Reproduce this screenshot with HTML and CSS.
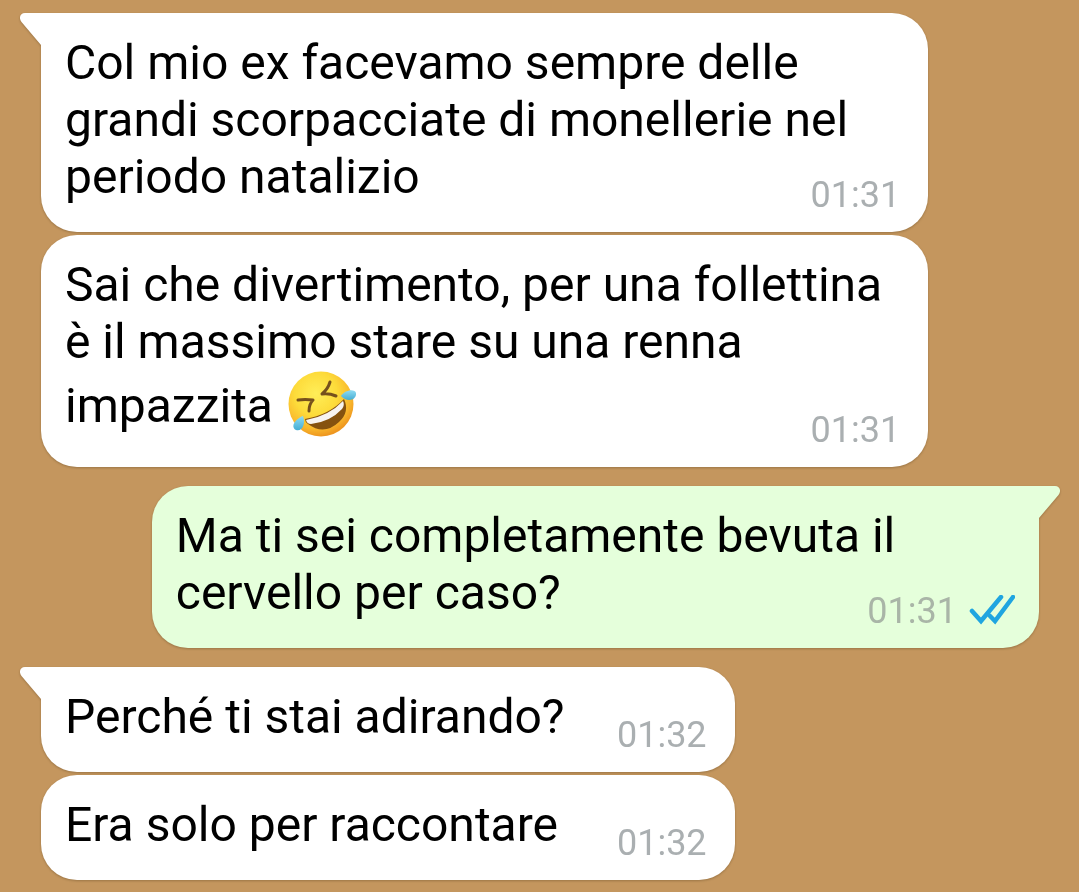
FILE: index.html
```html
<!DOCTYPE html>
<html lang="it">
<head>
    <meta charset="UTF-8">
    <meta name="viewport" content="width=device-width, initial-scale=1.0">
    <title>Chat</title>
    <link rel="stylesheet" href="styles.css">
</head>
<body>
    <main class="chat">
        <div class="group">
            <div class="bubble bubble-in has-tail">
                <svg class="tail" viewBox="0 0 22 33" aria-hidden="true"><path d="M22 0H5C0 0-1.500 5 1.500 9L21 32V33H22Z"/></svg>
                <p class="text">Col mio ex facevamo sempre delle grandi scorpacciate di monellerie nel periodo natalizio
                    <span class="meta"><time datetime="01:31">01:31</time></span></p>
            </div>
            <div class="bubble bubble-in has-emoji">
                <p class="text">Sai che divertimento, per una follettina è il massimo stare su una renna impazzita
                    <svg class="emoji" viewBox="0 0 70 70" role="img" aria-label="Faccina che si rotola dalle risate">
                        <defs>
                            <radialGradient id="face" cx="42%" cy="34%" r="66%">
                                <stop offset="0" stop-color="#ffee58"/>
                                <stop offset="0.5" stop-color="#fddb3a"/>
                                <stop offset="0.82" stop-color="#f9b82c"/>
                                <stop offset="1" stop-color="#ee961f"/>
                            </radialGradient>
                            <linearGradient id="tear" x1="0" y1="0" x2="0" y2="1">
                                <stop offset="0" stop-color="#8fdcf3"/>
                                <stop offset="1" stop-color="#45add3"/>
                            </linearGradient>
                        </defs>
                        <circle cx="34" cy="34" r="32.500" fill="url(#face)"/>
                        <path d="M11 30Q18 29 26 30Q22 34 22 41" fill="none" stroke="#76501c" stroke-width="3" stroke-linecap="round" stroke-linejoin="round"/>
                        <path d="M43 12Q41 19 35 24Q42 23 49 26" fill="none" stroke="#76501c" stroke-width="3" stroke-linecap="round" stroke-linejoin="round"/>
                        <path d="M18 49Q42 45 57 29Q63 42 52 52Q37 66 21 54Q18 52 18 49Z" fill="#85520f"/>
                        <path d="M19 50Q42 46 56 31Q58 35 55 39Q43 52 24 54Q20 54 19 50Z" fill="#f7f3f0"/>
                        <path d="M54 26C57 20 68 18 69 23C70 30 60 33 54 26Z" fill="url(#tear)"/>
                        <path d="M16 46C19 54 15 62 9 60C3 57 8 49 16 46Z" fill="url(#tear)"/>
                    </svg>
                    <span class="meta"><time datetime="01:31">01:31</time></span></p>
            </div>
        </div>

        <div class="group">
            <div class="bubble bubble-out has-tail">
                <svg class="tail" viewBox="0 0 22 33" aria-hidden="true"><path d="M22 0H5C0 0-1.500 5 1.500 9L21 32V33H22Z"/></svg>
                <p class="text">Ma ti sei completamente bevuta il cervello per caso?
                    <span class="meta">
                        <time datetime="01:31">01:31</time>
                        <svg class="checks" viewBox="0 0 46 32" role="img" aria-label="Letto">
                            <path d="M3 16L12 26L32 2M21 21L26 26L44 2"/>
                        </svg>
                    </span></p>
            </div>
        </div>

        <div class="group">
            <div class="bubble bubble-in has-tail">
                <svg class="tail" viewBox="0 0 22 33" aria-hidden="true"><path d="M22 0H5C0 0-1.500 5 1.500 9L21 32V33H22Z"/></svg>
                <p class="text">Perché ti stai adirando?
                    <span class="meta"><time datetime="01:32">01:32</time></span></p>
            </div>
            <div class="bubble bubble-in">
                <p class="text">Era solo per raccontare
                    <span class="meta"><time datetime="01:32">01:32</time></span></p>
            </div>
        </div>
    </main>
</body>
</html>
```
FILE: styles.css
```css
* {
    margin: 0;
    padding: 0;
    box-sizing: border-box;
}

body {
    font-family: Roboto, "Noto Sans", sans-serif;
    background: #c4965e;
    color: #000;
}

.chat {
    display: flex;
    flex-direction: column;
    gap: 19px;
    padding: 13px 40px 13px 41px;
}

.group {
    display: flex;
    flex-direction: column;
    gap: 3px;
}

.bubble {
    position: relative;
    min-width: 69.5%;
    max-width: 88.9%;
    border-radius: 36px;
    filter: drop-shadow(0 1px 1px rgba(60, 40, 10, 0.3));
}

.bubble-in {
    align-self: flex-start;
    background: #fff;
    fill: #fff;
}

.bubble-out {
    align-self: flex-end;
    background: #e5ffdb;
    fill: #e5ffdb;
}

.bubble-in.has-tail {
    border-top-left-radius: 0;
}

.bubble-out.has-tail {
    border-top-right-radius: 0;
}

.tail {
    position: absolute;
    top: 0;
    left: -21px;
    width: 22px;
    height: 33px;
}

.bubble-out .tail {
    left: auto;
    right: -21px;
    transform: scaleX(-1);
}

.text {
    display: flow-root;
    padding: 21px 24px 16px;
    font-size: 48px;
    line-height: 57px;
}

.emoji {
    width: 70px;
    height: 70px;
    margin: 0 2px;
    vertical-align: -18px;
}

/* floats into the last line and hangs a little below it */
.meta {
    float: right;
    display: flex;
    align-items: center;
    gap: 14px;
    margin: 26px 4px 0 40px;
    font-size: 36px;
    line-height: 42px;
    color: #aaafb1;
}

.has-emoji .meta {
    margin-top: 39px;
}

.bubble-out .meta {
    gap: 12px;
    margin-right: 0;
    color: #a9b5a7;
}

.checks {
    width: 46px;
    height: 32px;
    fill: none;
    stroke: #1fa5e0;
    stroke-width: 4.5;
    stroke-linecap: round;
}
```
